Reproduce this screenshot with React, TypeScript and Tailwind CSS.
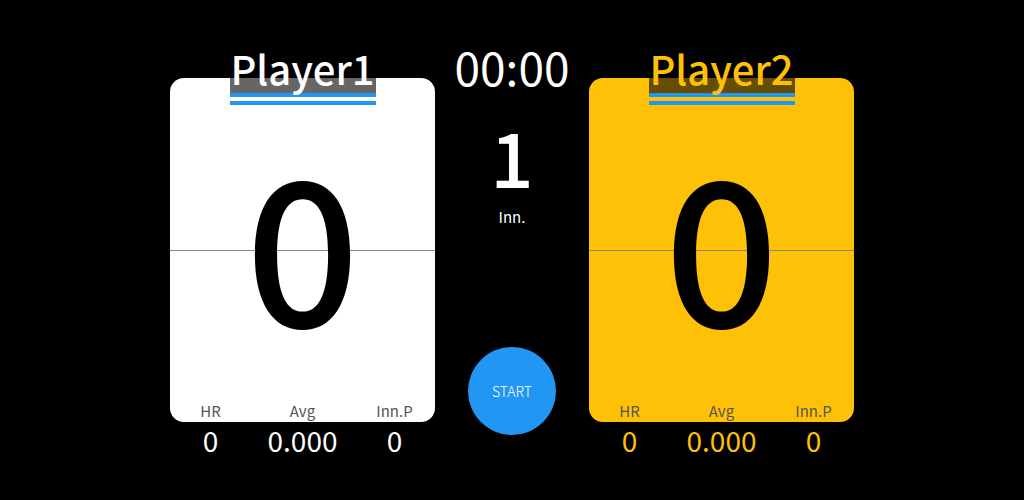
import React from 'react';

interface PlayerProps {
  name: string;
  score: number;
  hr: number;
  avg: string;
  innP: number;
  cardClass: string;
  textClass: string;
}

const medium = { fontFamily: '"Noto Sans CJK KR Medium", "Noto Sans CJK KR", sans-serif', fontWeight: 500 };

const PlayerBoard: React.FC<PlayerProps> = ({ name, score, hr, avg, innP, cardClass, textClass }) => {
  return (
    <div className="w-[265px] mt-[4px] flex flex-col items-center">
      {/* 이름 라벨 */}
      <div className="relative z-10 flex flex-col items-center">
        <div
          className={`w-[146px] bg-black/60 text-center text-[40px] leading-[40px] pb-[5px] border-b-4 border-[#2196f3] ${textClass}`}
          style={medium}
        >
          {name}
        </div>
        <div className="w-[146px] h-[4px] mt-[4px] bg-[#2196f3]" />
      </div>

      {/* 점수 카드 */}
      <div className={`relative -mt-[27px] w-[265px] h-[344px] rounded-[14px] flex flex-col items-center ${cardClass}`}>
        <div className="absolute left-0 right-0 top-[172px] h-px bg-[#888888]" />
        <div className="relative mt-[62px] text-[200px] leading-[200px] text-black" style={medium}>
          {score}
        </div>
        <div className="flex-1" />
        <div className="flex justify-center pb-[4px] text-[15px] leading-[14px] text-[#555555]">
          <div className="w-[92px] shrink-0 text-center">HR</div>
          <div className="w-[92px] shrink-0 text-center">Avg</div>
          <div className="w-[92px] shrink-0 text-center">Inn.P</div>
        </div>
      </div>

      {/* 기록 */}
      <div className={`flex justify-center mt-[5px] text-[28px] leading-[26px] ${textClass}`}>
        <div className="w-[92px] shrink-0 text-center">{hr}</div>
        <div className="w-[92px] shrink-0 text-center">{avg}</div>
        <div className="w-[92px] shrink-0 text-center">{innP}</div>
      </div>
    </div>
  );
};

export default function App() {
  return (
    <div
      className="w-[1024px] h-[500px] bg-black overflow-hidden flex justify-center items-start pt-[44px]"
      style={{ fontFamily: '"Noto Sans CJK KR", "Noto Sans", sans-serif' }}
    >
      <PlayerBoard
        name="Player1"
        score={0}
        hr={0}
        avg="0.000"
        innP={0}
        cardClass="bg-white"
        textClass="text-white"
      />

      {/* 가운데: 시간, 이닝, 시작 버튼 */}
      <div className="w-[154px] flex flex-col items-center text-white">
        <div className="text-[46px] leading-[44px]">00:00</div>
        <div className="mt-[37px] text-[76px] leading-[60px]" style={medium}>
          1
        </div>
        <div className="mt-[25px] text-[15px] leading-[13px]">Inn.</div>
        <button className="mt-[124px] w-[88px] h-[88px] rounded-full bg-[#2196f3] text-white text-[14px] font-light flex items-center justify-center">
          START
        </button>
      </div>

      <PlayerBoard
        name="Player2"
        score={0}
        hr={0}
        avg="0.000"
        innP={0}
        cardClass="bg-[#ffc107]"
        textClass="text-[#ffc107]"
      />
    </div>
  );
}
